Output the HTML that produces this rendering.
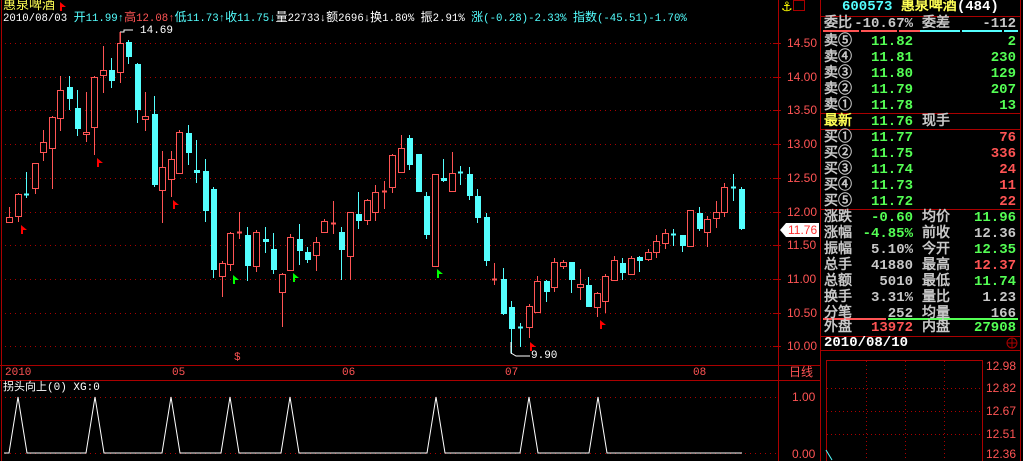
<!DOCTYPE html>
<html><head><meta charset="utf-8"><style>
body{margin:0;background:#000;width:1023px;height:461px;overflow:hidden;position:relative;font-family:"Liberation Mono","WenQuanYi Zen Hei",monospace;}
.t{position:absolute;white-space:pre;line-height:14px;}
.s{font-size:12px;}
.top{font-size:10.7px;}
.top b{font-weight:normal;font-size:12px;}
.r{position:absolute;font-size:14px;font-weight:bold;line-height:16px;white-space:pre;}
.gy{color:#c8c8c8}.gr{color:#54ff54}.rd{color:#ff5454}.cy{color:#54ffff}.yw{color:#ffff54}.wh{color:#fff}
.ax{position:absolute;color:#ff5454;font-size:12px;line-height:12px;font-family:"Liberation Sans Narrow","Liberation Sans",sans-serif;}
</style></head><body>
<svg id="sv" width="1023" height="461" style="position:absolute;left:0;top:0">
<g stroke="#a00" fill="none">
<line x1="1.5" y1="0" x2="1.5" y2="461"/>
<line x1="778.5" y1="0" x2="778.5" y2="461"/>
<line x1="820.5" y1="0" x2="820.5" y2="461"/>
<line x1="1020.5" y1="0" x2="1020.5" y2="461"/>
<line x1="0" y1="365.5" x2="820" y2="365.5"/>
<line x1="0" y1="380.5" x2="820" y2="380.5"/>
<line x1="820" y1="16.5" x2="1020" y2="16.5"/>
<line x1="820" y1="113.5" x2="1020" y2="113.5"/>
<line x1="820" y1="129.5" x2="1020" y2="129.5"/>
<line x1="820" y1="209.5" x2="1020" y2="209.5"/>
<line x1="820" y1="336.5" x2="1020" y2="336.5"/>
<line x1="820" y1="350.5" x2="1020" y2="350.5"/>
<rect x="826.5" y="360.5" width="156" height="110"/>
<rect x="793.5" y="0.5" width="11" height="10"/>
<circle cx="1012" cy="343" r="5"/><line x1="1007" y1="343" x2="1017" y2="343"/><line x1="1012" y1="338" x2="1012" y2="348"/>
</g>
<line x1="823" y1="31" x2="920" y2="31" stroke="#ff5454" stroke-width="2" stroke-dasharray="36,2"/>
<line x1="920" y1="31" x2="1018" y2="31" stroke="#54ffff" stroke-width="2" stroke-dasharray="40,2"/>
<line x1="823" y1="319" x2="886" y2="319" stroke="#ff5454" stroke-width="2"/>
<line x1="888" y1="319" x2="1018" y2="319" stroke="#54ff54" stroke-width="2"/>
<g id="g"></g>
<text x="781" y="11" fill="#ffff00" font-size="13" font-family="DejaVu Sans">⚓</text>
</svg>
<div class="t yw s" style="left:3px;top:-1px;font-size:13px">惠泉啤酒</div>
<div class="t top" style="left:3px;top:11px"><span class="wh">2010/08/03 </span><span class="cy"><b>开</b>11.99↑</span><span class="rd"><b>高</b>12.08↑</span><span class="cy"><b>低</b>11.73↑<b>收</b>11.75↓</span><span class="wh"><b>量</b>22733↓<b>额</b>2696↓<b>换</b>1.80% <b>振</b>2.91% </span><span class="cy"><b>涨</b>(-0.28)-2.33% <b>指数</b>(-45.51)-1.70%</span></div>
<div class="t wh s" style="left:140px;top:24px;font-size:11px">14.69</div>
<div class="t wh s" style="left:531px;top:349px;font-size:11px">9.90</div>
<div class="t rd s" style="left:234px;top:351px;font-size:11px">$</div>
<div class="t rd s" style="left:5px;top:366px;font-size:11px">2010</div>
<div class="t rd s" style="left:172px;top:366px;font-size:11px">05</div>
<div class="t rd s" style="left:342px;top:366px;font-size:11px">06</div>
<div class="t rd s" style="left:505px;top:366px;font-size:11px">07</div>
<div class="t rd s" style="left:693px;top:366px;font-size:11px">08</div>
<div class="t rd s" style="left:789px;top:366px">日线</div>
<div class="t wh s" style="left:3px;top:381px;font-size:11px">拐头向上(0) XG:0</div>
<div class="ax" style="left:792px;top:391px">1.00</div>
<div class="ax" style="left:792px;top:448px">0.00</div>
<div class="ax" style="left:986px;top:360px">12.98</div>
<div class="ax" style="left:986px;top:382px">12.82</div>
<div class="ax" style="left:986px;top:405px">12.67</div>
<div class="ax" style="left:986px;top:428px">12.51</div>
<div class="ax" style="left:986px;top:448px">12.36</div>
<div id="ax"></div>
<div class="ax" style="left:780px;top:223px;background:#fff;color:#ff3030;padding:1px 2px 1px 8px;clip-path:polygon(0 50%,6px 0,100% 0,100% 100%,6px 100%)">11.76</div>
<div class="r cy" style="left:842px;top:-1px">600573 <span class="yw">惠泉啤酒</span><span class="wh">(484)</span></div>
<div class="r gy" style="left:824px;top:16px">委比</div><div class="r gy" style="left:850px;top:16px;width:63px;text-align:right">-10.67%</div><div class="r gy" style="left:922px;top:16px">委差</div><div class="r gy" style="left:960px;top:16px;width:56px;text-align:right">-112</div>
<div id="rows"></div>
<script>
var rows=[
["卖⑤","11.82","2",34,"gr","gr"],["卖④","11.81","230",50,"gr","gr"],["卖③","11.80","129",66,"gr","gr"],["卖②","11.79","207",82,"gr","gr"],["卖①","11.78","13",98,"gr","gr"],
["买①","11.77","76",130,"gr","rd"],["买②","11.75","336",146,"gr","rd"],["买③","11.74","24",162,"gr","rd"],["买④","11.73","11",178,"gr","rd"],["买⑤","11.72","22",194,"gr","rd"]];
var h="";
rows.forEach(function(r){h+='<div class="r gy" style="left:824px;top:'+r[3]+'px">'+r[0]+'</div><div class="r '+r[4]+'" style="left:850px;top:'+r[3]+'px;width:63px;text-align:right">'+r[1]+'</div><div class="r '+r[5]+'" style="left:960px;top:'+r[3]+'px;width:56px;text-align:right">'+r[2]+'</div>';});
h+='<div class="r yw" style="left:824px;top:114px">最新</div><div class="r gr" style="left:850px;top:114px;width:63px;text-align:right">11.76</div><div class="r gy" style="left:922px;top:114px">现手</div>';
var st=[["涨跌","-0.60","gr","均价","11.96","gr"],["涨幅","-4.85%","gr","前收","12.36","gy"],["振幅","5.10%","gy","今开","12.35","gr"],["总手","41880","gy","最高","12.37","rd"],["总额","5010","gy","最低","11.74","gr"],["换手","3.31%","gy","量比","1.23","gy"],["分笔","252","gy","均量","166","gy"]];
st.forEach(function(s,i){var y=210+i*16;h+='<div class="r gy" style="left:824px;top:'+y+'px">'+s[0]+'</div><div class="r '+s[2]+'" style="left:850px;top:'+y+'px;width:63px;text-align:right">'+s[1]+'</div><div class="r gy" style="left:922px;top:'+y+'px">'+s[3]+'</div><div class="r '+s[5]+'" style="left:950px;top:'+y+'px;width:66px;text-align:right">'+s[4]+'</div>';});
h+='<div class="r gy" style="left:824px;top:320px">外盘</div><div class="r rd" style="left:850px;top:320px;width:63px;text-align:right">13972</div><div class="r gy" style="left:922px;top:320px">内盘</div><div class="r gr" style="left:950px;top:320px;width:66px;text-align:right">27908</div>';
h+='<div class="r wh" style="left:824px;top:335px">2010/08/10</div>';
document.getElementById('rows').innerHTML=h;
var ax="",lv=["14.50","14.00","13.50","13.00","12.50","12.00","11.50","11.00","10.50","10.00"];
var g="";
lv.forEach(function(l,i){var y=Math.round(43+i*33.7);ax+='<div class="ax" style="left:787px;top:'+(y-6)+'px">'+l+'</div>';
g+='<line x1="5" y1="'+(y+.5)+'" x2="776" y2="'+(y+.5)+'" stroke="#a00" stroke-dasharray="1,4"/><line x1="773" y1="'+(y+.5)+'" x2="781" y2="'+(y+.5)+'" stroke="#a00"/>';});
document.getElementById('ax').innerHTML=ax;
[397,453].forEach(function(y){g+='<line x1="5" y1="'+(y+.5)+'" x2="776" y2="'+(y+.5)+'" stroke="#a00" stroke-dasharray="1,4"/>';});
[388,411,434].forEach(function(y){g+='<line x1="827" y1="'+(y+.5)+'" x2="982" y2="'+(y+.5)+'" stroke="#a00" stroke-dasharray="1,3"/>';});
[866,905,944].forEach(function(x){g+='<line x1="'+(x+.5)+'" y1="361" x2="'+(x+.5)+'" y2="461" stroke="#a00" stroke-dasharray="1,3"/>';});
var C=[[9,'r',217,222,207,223],[18,'r',194,216,193,222],[26,'c',194,194,172,198],[35,'r',163,188,163,194],[43,'r',142,152,130,161],[52,'r',117,148,116,189],[60,'r',90,118,76,131],[69,'c',87,99,76,110],[77,'c',108,129,90,136],[86,'r',132,134,92,142],[94,'r',77,127,76,155],[103,'r',70,75,46,93],[111,'c',70,81,58,88],[120,'r',43,72,32,83],[128,'c',42,57,40,64],[137,'c',64,110,63,123],[145,'r',116,119,92,131],[154,'c',114,185,96,187],[162,'r',167,190,151,223],[171,'r',159,179,151,197],[179,'r',132,173,130,174],[188,'c',133,153,125,165],[196,'c',170,173,140,183],[205,'c',171,211,159,222],[213,'c',189,270,187,278],[222,'r',263,276,261,297],[230,'r',233,264,232,271],[239,'r',232,232,212,239],[247,'c',235,266,227,281],[256,'r',232,266,230,272],[265,'c',239,242,227,253],[273,'c',249,270,233,274],[282,'r',274,292,273,327],[290,'r',237,270,234,271],[299,'c',239,251,224,265],[307,'c',252,260,247,263],[316,'r',242,255,237,271],[324,'r',221,232,219,233],[333,'r',223,223,201,234],[341,'c',232,250,227,280],[350,'r',212,256,212,280],[358,'c',214,221,192,229],[367,'r',200,220,199,225],[375,'r',192,212,185,221],[384,'r',191,191,181,209],[392,'r',155,187,154,193],[401,'r',148,172,135,172],[409,'c',138,165,135,170],[418,'c',154,192,154,192],[426,'c',196,235,192,239],[435,'r',174,266,174,266],[443,'c',178,181,159,182],[452,'r',173,191,152,191],[460,'c',172,172,166,185],[469,'c',174,196,167,200],[477,'c',196,218,189,223],[486,'c',217,261,213,266],[494,'r',279,279,263,285],[503,'c',279,314,268,315],[511,'c',307,329,301,354],[520,'c',327,327,323,347],[529,'r',306,327,304,338],[537,'r',281,312,276,312],[546,'c',281,292,280,302],[554,'r',262,287,258,292],[563,'r',262,266,260,269],[571,'c',262,280,262,293],[580,'r',284,287,269,300],[588,'c',285,307,277,307],[597,'r',293,307,292,317],[605,'r',276,301,274,313],[614,'r',260,280,256,280],[622,'c',263,273,258,280],[631,'r',258,274,256,274],[639,'c',257,261,256,272],[648,'r',252,259,249,261],[656,'r',241,252,235,258],[665,'r',233,243,229,249],[673,'c',234,234,229,246],[682,'c',235,246,235,252],[690,'r',210,246,210,246],[699,'c',213,229,207,231],[707,'r',219,232,216,247],[716,'r',212,218,201,228],[724,'r',187,212,183,217],[733,'c',187,187,174,201],[741,'c',189,229,187,230]];
C.forEach(function(c){var col=c[1]=='r'?'#ff5454':'#54ffff',x=c[0];
g+='<line x1="'+(x+.5)+'" y1="'+c[4]+'" x2="'+(x+.5)+'" y2="'+c[5]+'" stroke="'+col+'"/>';
if(c[3]-c[2]<2){g+='<line x1="'+(x-2)+'" y1="'+(c[2]+.5)+'" x2="'+(x+3)+'" y2="'+(c[2]+.5)+'" stroke="'+col+'" stroke-width="2"/>';}
else if(c[1]=='r'){g+='<rect x="'+(x-2.5)+'" y="'+(c[2]+.5)+'" width="6" height="'+(c[3]-c[2])+'" fill="#000" stroke="'+col+'"/>';}
else{g+='<rect x="'+(x-2)+'" y="'+c[2]+'" width="6" height="'+(c[3]-c[2])+'" fill="'+col+'"/>';}});
function fl(x,y,col){g+='<polygon points="'+x+','+y+' '+x+','+(y+9)+' '+(x+2)+','+(y+9)+' '+(x+2)+','+(y+5)+' '+(x+6)+','+(y+5)+'" fill="'+col+'"/>';}
fl(60,2,'#ff0000');
[[21,225],[97,158],[173,200],[530,342],[600,320]].forEach(function(p){fl(p[0],p[1],'#ff0000');});
[[233,275],[293,273],[437,269]].forEach(function(p){fl(p[0],p[1],'#00ff00');});
g+='<polyline points="120,32 124,32 124,30 133,30" stroke="#fff" fill="none"/><line x1="120" y1="32" x2="120" y2="43" stroke="#ff5454"/>';
g+='<polyline points="511,342 511,353 516,356 530,356" stroke="#fff" fill="none"/>';
var pk=[18,95,171,230,290,436,529,598],pts="4,453";
pk.forEach(function(x){pts+=' '+(x-9)+',453 '+x+',397 '+(x+9)+',453';});pts+=' 742,453';
g+='<polyline points="'+pts+'" stroke="#fff" fill="none"/>';
g+='<polyline points="826,450 832,460" stroke="#54ffff" fill="none"/>';
document.getElementById('g').innerHTML=g;
</script>
</body></html>
